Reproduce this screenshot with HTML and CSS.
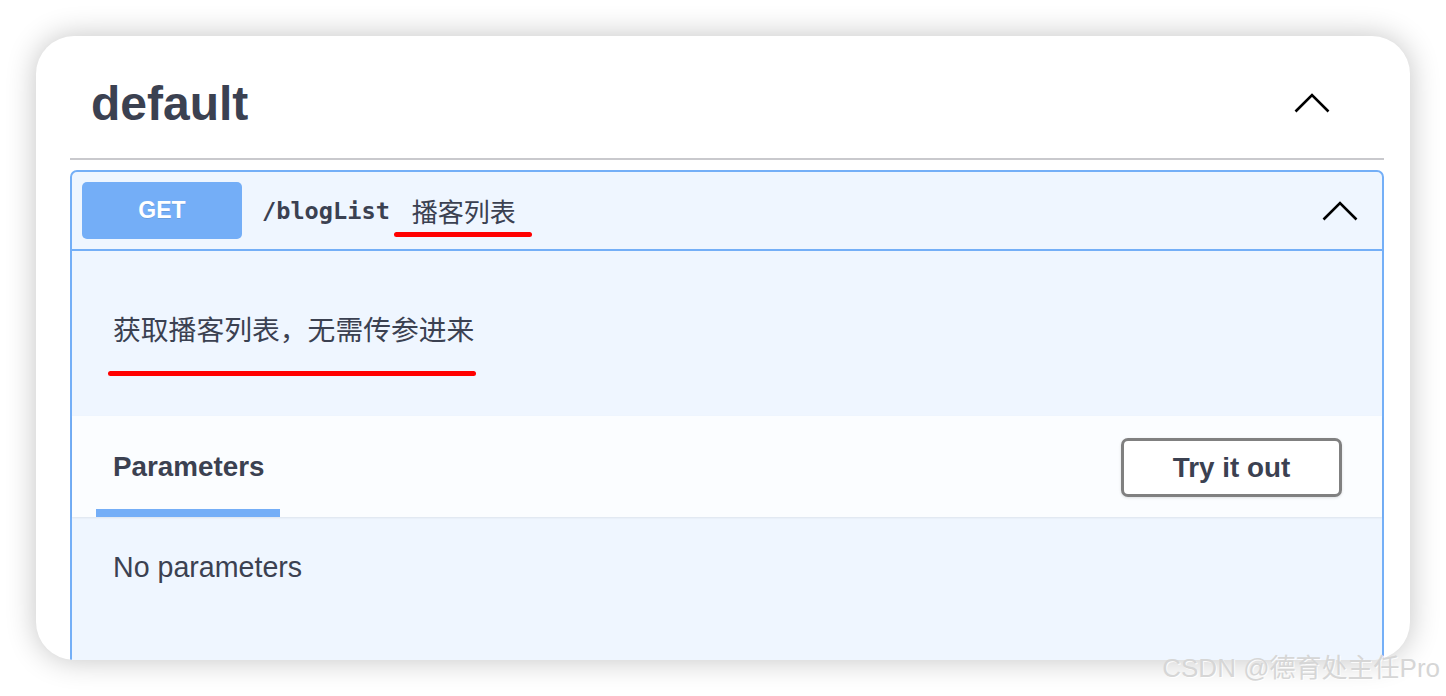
FILE: index.html
```html
<!DOCTYPE html>
<html lang="zh">
<head>
<meta charset="utf-8">
<title>default</title>
<link rel="stylesheet" href="styles.css">
</head>
<body>
<div class="card">
  <div class="tag-header">
    <h3 class="tag-title">default</h3>
    <svg class="chev chev-tag" width="36" height="20" viewBox="0 0 36 20"><polyline points="1.5,18.5 18,2 34.5,18.5" fill="none" stroke="#000" stroke-width="2.6"/></svg>
  </div>
  <div class="opblock">
    <div class="summary">
      <span class="method">GET</span>
      <span class="path">/blogList</span>
      <span class="summary-desc mark">播客列表</span>
      <svg class="chev chev-op" width="36" height="20" viewBox="0 0 36 20"><polyline points="1.5,18.5 18,2 34.5,18.5" fill="none" stroke="#000" stroke-width="2.6"/></svg>
    </div>
    <div class="description">
      <p class="desc-text mark-long">获取播客列表，无需传参进来</p>
    </div>
    <div class="params-header">
      <div class="tab">Parameters</div>
      <button class="try-btn">Try it out</button>
    </div>
    <div class="params-body">
      <p class="no-params">No parameters</p>
    </div>
  </div>
</div>
<div class="watermark">CSDN @德育处主任Pro</div>
</body>
</html>
```

FILE: styles.css
```css
html, body {
  margin: 0;
  padding: 0;
}
body {
  width: 1446px;
  height: 696px;
  overflow: hidden;
  background: #ffffff;
  position: relative;
  font-family: "Liberation Sans", "Noto Sans CJK SC", sans-serif;
  color: #3b4151;
}
.card {
  margin: 36px 0 0 36px;
  width: 1374px;
  height: 624px;
  box-sizing: border-box;
  padding: 0 26px 0 34px;
  background: #ffffff;
  border-radius: 38px;
  box-shadow: 0 0 30px rgba(0, 0, 0, 0.24);
  overflow: hidden;
}
.tag-header {
  height: 124px;
  box-sizing: border-box;
  display: flex;
  align-items: center;
  justify-content: space-between;
  padding: 14px 54px 0 21px;
  border-bottom: 2px solid #c9c9cd;
}
.tag-title {
  margin: 0;
  font-size: 48px;
  font-weight: bold;
  color: #3b4151;
  line-height: 1;
}
.chev { display: block; }
.chev-tag { position: relative; top: -1px; }
.opblock {
  margin-top: 10px;
  border: 2px solid #74aff7;
  border-radius: 7px;
  background: #eff6ff;
  height: 520px;
}
.summary {
  display: flex;
  align-items: center;
  padding: 10px 24px 10px 10px;
  height: 57px;
  border-bottom: 2px solid #74aff7;
}
.method {
  width: 160px;
  height: 57px;
  display: flex;
  align-items: center;
  justify-content: center;
  background: #74aef7;
  border-radius: 5px;
  color: #ffffff;
  font-weight: bold;
  font-size: 23px;
  text-shadow: 0 1px 0 rgba(0, 0, 0, 0.1);
}
.path {
  margin-left: 20px;
  font-family: "DejaVu Sans Mono", "Liberation Mono", monospace;
  font-weight: bold;
  font-size: 23.6px;
  color: #3b4151;
}
.summary-desc {
  margin-left: 22px;
  font-size: 26px;
  font-family: "Noto Sans CJK SC", sans-serif;
  color: #3b4151;
  flex: 1;
  position: relative;
}
.mark::after {
  content: "";
  position: absolute;
  left: -18px;
  top: 40px;
  width: 138px;
  height: 5px;
  border-radius: 3px;
  background: #ff0000;
}
.description {
  height: 165px;
  box-sizing: border-box;
  padding: 59px 0 0 41px;
}
.desc-text {
  margin: 0;
  font-family: "Noto Sans CJK SC", sans-serif;
  font-size: 27.8px;
  line-height: 36px;
  color: #3b4151;
  position: relative;
  display: inline-block;
}
.mark-long::after {
  content: "";
  position: absolute;
  left: -5px;
  top: 61px;
  width: 368px;
  height: 5px;
  border-radius: 3px;
  background: #ff0000;
}
.params-header {
  height: 101px;
  box-sizing: border-box;
  background: #fbfdff;
  display: flex;
  align-items: center;
  justify-content: space-between;
  padding: 0 40px 0 24px;
  box-shadow: 0 1px 2px rgba(0, 0, 0, 0.08);
  position: relative;
}
.tab {
  align-self: stretch;
  width: 184px;
  box-sizing: border-box;
  padding-left: 17px;
  display: flex;
  align-items: center;
  font-size: 27.8px;
  font-weight: bold;
  color: #3b4151;
  border-bottom: 8px solid #74aef7;
  padding-top: 8px;
}
.try-btn {
  width: 221px;
  height: 59px;
  box-sizing: border-box;
  border: 3px solid #808080;
  border-radius: 7px;
  background: #ffffff;
  font-family: "Liberation Sans", sans-serif;
  font-weight: bold;
  font-size: 27.8px;
  color: #3b4151;
  box-shadow: 0 1px 3px rgba(0, 0, 0, 0.12);
  padding: 0;
  position: relative;
  top: 1px;
}
.params-body {
  padding: 32px 0 0 41px;
}
.no-params {
  margin: 0;
  font-size: 28.6px;
  line-height: 36px;
  color: #3b4151;
}
.watermark {
  position: absolute;
  right: 6px;
  top: 651px;
  font-family: "Liberation Sans", "Noto Sans CJK SC", sans-serif;
  font-size: 26px;
  line-height: 34px;
  color: #d6d6d6;
  text-shadow: 1px 1px 0 rgba(255, 255, 255, 0.9);
  white-space: nowrap;
}
```
